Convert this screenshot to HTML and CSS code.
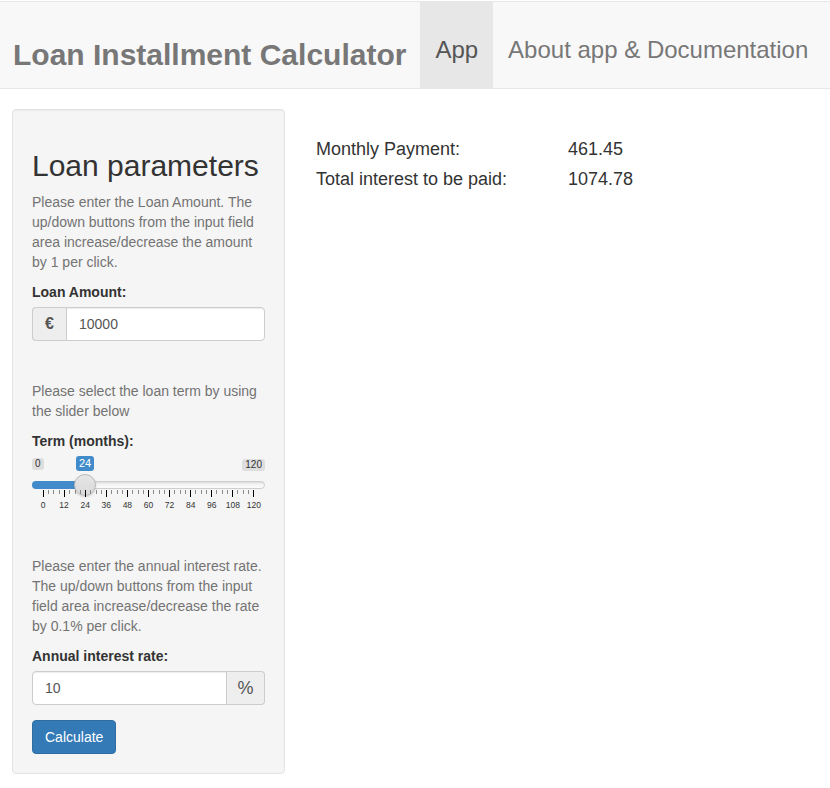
FILE: index.html
```html
<!DOCTYPE html>
<html lang="en">
<head>
<meta charset="utf-8">
<title>Loan Installment Calculator</title>
<link rel="stylesheet" href="styles.css">
</head>
<body>
<nav class="navbar">
  <div class="brand">Loan Installment Calculator</div>
  <ul class="nav">
    <li class="active"><a>App</a></li>
    <li><a>About app &amp; Documentation</a></li>
  </ul>
</nav>
<div class="page">
  <aside class="well">
    <h2>Loan parameters</h2>
    <p class="help">Please enter the Loan Amount. The up/down buttons from the input field area increase/decrease the amount by 1 per click.</p>
    <div class="form-group">
      <label>Loan Amount:</label>
      <div class="input-group">
        <span class="addon addon-left addon-euro">€</span>
        <input class="form-control control-right" value="10000">
      </div>
    </div>
    <p class="help spaced">Please select the loan term by using the slider below</p>
    <div class="form-group">
      <label>Term (months):</label>
      <div class="irs">
        <span class="irs-min">0</span>
        <span class="irs-max">120</span>
        <span class="irs-single">24</span>
        <span class="irs-line"></span>
        <span class="irs-bar"></span>
        <span class="irs-handle"></span>
        <svg class="irs-ticks" width="233" height="8" viewBox="0 0 233 8">
          <g stroke="#000" stroke-width="1">
            <path d="M11.5 0v7M32.5 0v7M53.5 0v7M74.5 0v7M95.5 0v7M116.5 0v7M137.5 0v7M158.5 0v7M179.5 0v7M200.5 0v7M221.5 0v7"/>
          </g>
          <g stroke="#8a8a8a" stroke-width="1">
            <path d="M16.5 0v4M21.5 0v4M27.5 0v4M37.5 0v4M43.5 0v4M48.5 0v4M58.5 0v4M64.5 0v4M69.5 0v4M79.5 0v4M85.5 0v4M90.5 0v4M100.5 0v4M106.5 0v4M111.5 0v4M121.5 0v4M127.5 0v4M132.5 0v4M142.5 0v4M148.5 0v4M153.5 0v4M163.5 0v4M169.5 0v4M174.5 0v4M184.5 0v4M190.5 0v4M195.5 0v4M205.5 0v4M211.5 0v4M216.5 0v4"/>
          </g>
        </svg>
        <div class="irs-grid-text">
          <span><i>0</i></span><span><i>12</i></span><span><i>24</i></span><span><i>36</i></span><span><i>48</i></span><span><i>60</i></span><span><i>72</i></span><span><i>84</i></span><span><i>96</i></span><span><i>108</i></span><span><i>120</i></span>
        </div>
      </div>
    </div>
    <p class="help spaced">Please enter the annual interest rate. The up/down buttons from the input field area increase/decrease the rate by 0.1% per click.</p>
    <div class="form-group">
      <label>Annual interest rate:</label>
      <div class="input-group">
        <input class="form-control control-left" value="10">
        <span class="addon addon-right addon-pct">%</span>
      </div>
    </div>
    <button class="btn">Calculate</button>
  </aside>
  <main class="results">
    <div class="result-row"><span>Monthly Payment:</span><span>461.45</span></div>
    <div class="result-row"><span>Total interest to be paid:</span><span>1074.78</span></div>
  </main>
</div>
</body>
</html>
```

FILE: styles.css
```css
* { box-sizing: border-box; }

body {
  margin: 0;
  font-family: "Liberation Sans", Arial, sans-serif;
  font-size: 14px;
  line-height: 20px;
  color: #333;
  background: #fff;
}

.navbar {
  margin-top: 1px;
  height: 88px;
  display: flex;
  align-items: stretch;
  background: #f8f8f8;
  border-top: 1px solid #e7e7e7;
  border-bottom: 1px solid #e7e7e7;
}

.brand {
  padding: 36px 14px 0 13px;
  font-size: 30px;
  line-height: 34px;
  font-weight: bold;
  color: #777;
  white-space: nowrap;
}

.nav {
  list-style: none;
  margin: 0;
  padding: 0;
  display: flex;
  align-items: stretch;
}

.nav li { display: flex; }

.nav a {
  display: block;
  padding: 34px 15px 0 15px;
  font-size: 24px;
  line-height: 28px;
  color: #777;
  white-space: nowrap;
}

.nav .active a {
  background: #e7e7e7;
  color: #555;
}

.page {
  display: flex;
  align-items: flex-start;
  margin-top: 20px;
}

.well {
  margin-left: 12px;
  width: 273px;
  padding: 19px;
  background: #f5f5f5;
  border: 1px solid #e3e3e3;
  border-radius: 4px;
  box-shadow: inset 0 1px 1px rgba(0,0,0,0.05);
}

.well h2 {
  margin: 20px 0 10px;
  font-size: 30px;
  line-height: 33px;
  font-weight: normal;
  color: #333;
}

.help {
  margin: 0 0 10px;
  color: #737373;
}

.help.spaced { margin-top: 40px; }

.form-group { margin-bottom: 15px; }

label {
  display: block;
  margin-bottom: 5px;
  font-weight: bold;
  color: #333;
}

.input-group {
  display: flex;
  height: 34px;
}

.form-control {
  flex: 1;
  min-width: 0;
  height: 34px;
  padding: 6px 12px;
  font-family: inherit;
  font-size: 14px;
  line-height: 20px;
  color: #555;
  background: #fff;
  border: 1px solid #ccc;
  box-shadow: inset 0 1px 1px rgba(0,0,0,0.075);
}

.control-right { border-radius: 0 4px 4px 0; }
.control-left { border-radius: 4px 0 0 4px; }

.addon {
  display: flex;
  align-items: center;
  justify-content: center;
  background: #eee;
  border: 1px solid #ccc;
  color: #555;
}

.addon-left {
  border-right: 0;
  border-radius: 4px 0 0 4px;
}

.addon-right {
  border-left: 0;
  border-radius: 0 4px 4px 0;
}

.addon-euro {
  width: 34px;
  font-size: 16px;
  font-weight: bold;
}

.addon-pct {
  width: 38px;
  font-size: 18px;
}

/* slider */
.irs {
  position: relative;
  height: 60px;
}

.irs-min, .irs-max {
  position: absolute;
  top: 2px;
  padding: 0 3px;
  font-size: 10px;
  line-height: 12px;
  color: #333;
  background: #dedede;
  border-radius: 3px;
}

.irs-min { left: 0; }
.irs-max { right: 0; top: 3px; }

.irs-single {
  position: absolute;
  top: 0;
  left: 44px;
  width: 18px;
  text-align: center;
  font-size: 11px;
  line-height: 15px;
  color: #fff;
  background: #428bca;
  border-radius: 3px;
}

.irs-line {
  position: absolute;
  top: 25px;
  left: 0;
  right: 0;
  height: 8px;
  border: 1px solid #cfcfcf;
  border-radius: 4px;
  background: linear-gradient(to bottom, #dcdcdc, #f4f4f4 40%, #fbfbfb);
}

.irs-bar {
  position: absolute;
  top: 25px;
  left: 0;
  width: 53px;
  height: 8px;
  background: #428bca;
  border-radius: 4px 0 0 4px;
}

.irs-handle {
  position: absolute;
  top: 18px;
  left: 42px;
  width: 22px;
  height: 22px;
  border-radius: 50%;
  border: 1px solid #b9b9b9;
  background: linear-gradient(to bottom, #e6e6e6, #d9d9d9);
  box-shadow: 0 1px 2px rgba(0,0,0,0.15);
}

.irs-ticks {
  position: absolute;
  top: 34px;
  left: 0;
}

.irs-grid-text {
  position: absolute;
  top: 44px;
  left: 11px;
  width: 211px;
  display: flex;
  justify-content: space-between;
}

.irs-grid-text span {
  width: 0;
  display: flex;
  justify-content: center;
}

.irs-grid-text i {
  font-style: normal;
  font-size: 8.5px;
  line-height: 10px;
  color: #333;
  white-space: nowrap;
}

.btn {
  display: block;
  height: 34px;
  padding: 6px 12px;
  font-family: inherit;
  font-size: 14px;
  line-height: 20px;
  color: #fff;
  background: #337ab7;
  border: 1px solid #2e6da4;
  border-radius: 4px;
}

.results {
  margin-left: 31px;
  padding-top: 25px;
  font-size: 18px;
  line-height: 30px;
}

.result-row {
  display: grid;
  grid-template-columns: 252px auto;
}
```
